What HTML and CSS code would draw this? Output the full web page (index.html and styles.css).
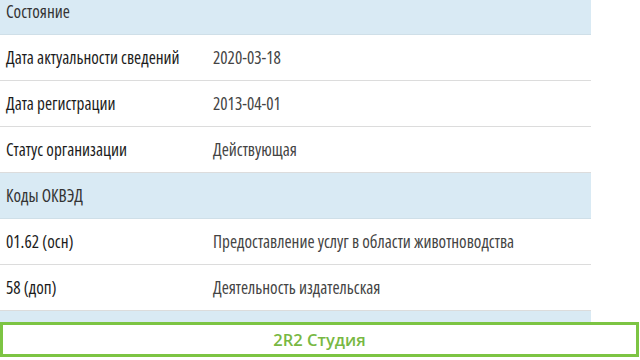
FILE: index.html
```html
<!DOCTYPE html>
<html lang="ru">
<head>
<meta charset="utf-8">
<link rel="stylesheet" href="styles.css">
</head>
<body>
<table class="info">
  <colgroup><col class="col-label"><col class="col-value"></colgroup>
  <tr class="section"><td colspan="2">Состояние</td></tr>
  <tr><td class="label">Дата актуальности сведений</td><td class="value">2020-03-18</td></tr>
  <tr><td class="label">Дата регистрации</td><td class="value">2013-04-01</td></tr>
  <tr><td class="label">Статус организации</td><td class="value">Действующая</td></tr>
  <tr class="section"><td colspan="2">Коды ОКВЭД</td></tr>
  <tr><td class="label">01.62 (осн)</td><td class="value">Предоставление услуг в области животноводства</td></tr>
  <tr><td class="label">58 (доп)</td><td class="value">Деятельность издательская</td></tr>
  <tr class="section"><td colspan="2">Учредители</td></tr>
</table>
<div class="banner">2R2 Студия</div>
</body>
</html>
```
FILE: styles.css
```css
html, body {
  margin: 0;
  padding: 0;
  background: #ffffff;
  overflow: hidden;
}
body {
  font-family: "Open Sans", "DejaVu Sans", sans-serif;
  font-stretch: 87%;
  font-size: 17.2px;
  color: #333;
}
.info {
  width: 591px;
  margin-top: -11px;
  border-collapse: collapse;
  table-layout: fixed;
}
.col-label {
  width: 207px;
}
.info td {
  height: 45px;
  padding: 0 6px;
  border-bottom: 1px solid #dcdcdc;
  vertical-align: middle;
  white-space: nowrap;
}
.info .section td {
  background: #d9eaf4;
  color: #333;
  border-bottom: 1px solid #cfdfe8;
}
.label {
  color: #1c1c1c;
}
.value {
  color: #444;
}
.banner {
  position: fixed;
  left: 0;
  right: 1px;
  bottom: 3px;
  height: 29px;
  border: 3px solid #7cc443;
  background: #fff;
  color: #78b843;
  font-size: 16.5px;
  font-stretch: 100%;
  font-weight: 600;
  text-align: center;
  line-height: 29px;
}
```
